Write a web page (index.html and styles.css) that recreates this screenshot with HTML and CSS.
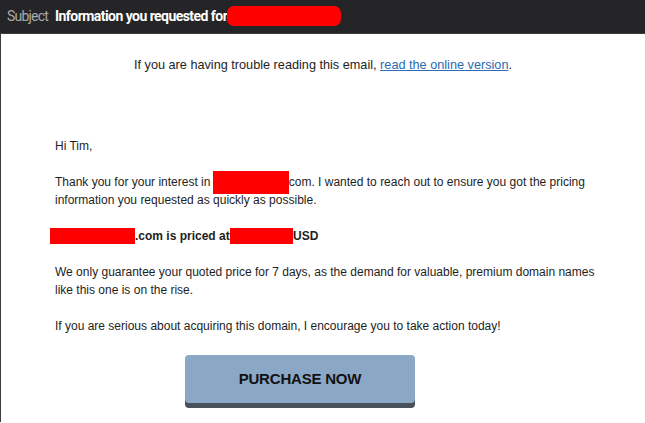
FILE: index.html
```html
<!DOCTYPE html>
<html>
<head>
<meta charset="utf-8">
<link rel="stylesheet" href="styles.css">
</head>
<body>
<header class="subject-bar">
  <span class="subject-label">Subject</span>
  <span class="subject-title">Information you requested for</span>
  <span class="redact-pill"></span>
</header>
<main class="mail">
  <p class="trouble">If you are having trouble reading this email, <a href="#">read the online version</a>.</p>
  <section class="content">
    <p>Hi Tim,</p>
    <p>Thank you for your interest in <span class="redact r1"></span>com. I wanted to reach out to ensure you got the pricing information you requested as quickly as possible.</p>
    <p class="price"><span class="redact r2"></span>.com is priced at <span class="redact r3"></span>USD</p>
    <p>We only guarantee your quoted price for 7 days, as the demand for valuable, premium domain names like this one is on the rise.</p>
    <p>If you are serious about acquiring this domain, I encourage you to take action today!</p>
    <div class="cta-row"><a class="cta" href="#">PURCHASE NOW</a></div>
  </section>
</main>
</body>
</html>
```
FILE: styles.css
```css
html, body {
  margin: 0;
  padding: 0;
  background: #ffffff;
  height: 100%;
  overflow: hidden;
}
body {
  font-family: "Liberation Sans", Arial, sans-serif;
  color: #1e1e1e;
}
.subject-bar {
  height: 34px;
  background: #252527;
  border-bottom: 1px solid #3e3e42;
  display: flex;
  align-items: center;
  padding: 0 0 2px 7px;
  box-sizing: border-box;
}
.subject-label {
  font-family: Roboto, "Open Sans", sans-serif;
  font-size: 14px;
  color: #a9a9ab;
  letter-spacing: -0.8px;
}
.subject-title {
  font-family: Roboto, "Open Sans", sans-serif;
  font-weight: 700;
  font-size: 14px;
  color: #ffffff;
  margin-left: 7px;
  letter-spacing: -0.55px;
}
.redact-pill {
  width: 114px;
  height: 20px;
  background: #ff0000;
  border-radius: 7px;
}
.mail {
  border-left: 1px solid #3c3c3e;
  min-height: calc(100% - 35px);
  box-sizing: border-box;
  font-size: 12px;
  line-height: 18px;
}
.trouble {
  margin: 0;
  padding-top: 22px;
  text-align: center;
  font-size: 12.7px;
}
.trouble a {
  color: #2a6bb3;
  text-decoration: underline;
}
.content {
  padding: 63px 40px 0 54px;
}
.content p {
  margin: 0 0 18px 0;
}
.price {
  font-weight: 700;
}
.redact {
  display: inline-block;
  background: #ff0000;
  vertical-align: middle;
}
.r1 {
  width: 76px;
  height: 23px;
  margin: -4px 0 -4px -1px;
}
.r2 {
  width: 85px;
  height: 16px;
  margin-left: -5px;
  margin-top: -2px;
}
.r3 {
  width: 63px;
  height: 16px;
  margin-left: -3px;
  margin-top: -2px;
}
.cta-row {
  display: flex;
  padding-left: 130px;
  margin-top: 20px;
}
.cta {
  width: 230px;
  height: 48px;
  display: flex;
  align-items: center;
  justify-content: center;
  background: #8ba7c6;
  border-radius: 4px;
  box-shadow: 0 5px 0 #48525a;
  color: #111111;
  font-weight: 700;
  font-size: 15px;
  text-decoration: none;
  letter-spacing: -0.2px;
}
```
